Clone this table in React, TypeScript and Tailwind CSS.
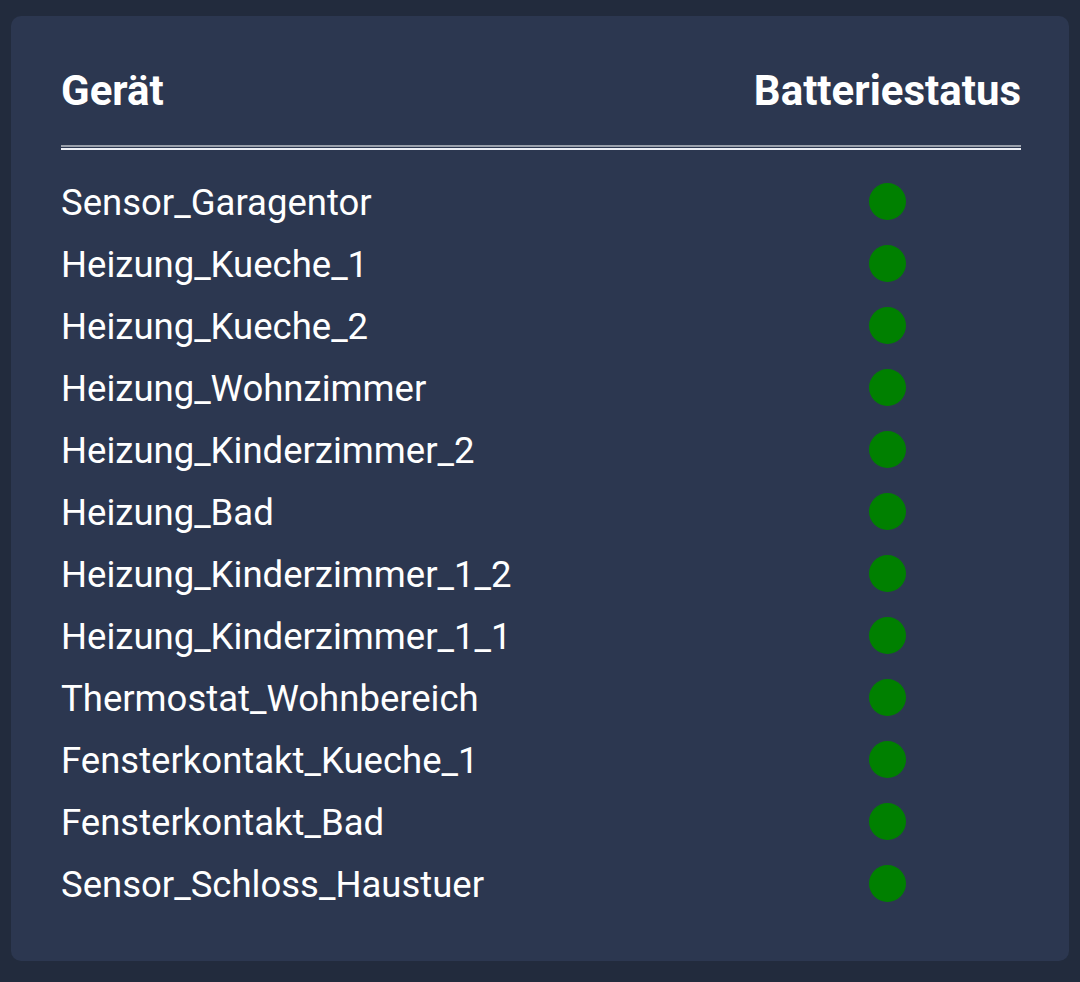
const devices = [
  "Sensor_Garagentor",
  "Heizung_Kueche_1",
  "Heizung_Kueche_2",
  "Heizung_Wohnzimmer",
  "Heizung_Kinderzimmer_2",
  "Heizung_Bad",
  "Heizung_Kinderzimmer_1_2",
  "Heizung_Kinderzimmer_1_1",
  "Thermostat_Wohnbereich",
  "Fensterkontakt_Kueche_1",
  "Fensterkontakt_Bad",
  "Sensor_Schloss_Haustuer",
];

export default function App() {
  return (
    <div
      className="min-h-[982px] bg-[#222b3d] px-[11px] pt-4 pb-[21px] text-white"
      style={{ fontFamily: "Roboto, 'Noto Sans', sans-serif" }}
    >
      <div className="rounded-[10px] bg-[#2c3750] pl-[50px] pr-[48px] pt-[50px] pb-[47px]">
        <div className="grid grid-cols-[1fr_auto]">
          <div className="flex h-[48px] items-center text-[42px] font-bold">Gerät</div>
          <div className="flex h-[48px] items-center text-[42px] font-bold">Batteriestatus</div>
        </div>
        <div className="mt-[31px] flex flex-col">
          <div className="h-[2px] bg-[#9aa0ab]" />
          <div className="h-px" />
          <div className="h-[2px] bg-[#eef0f6]" />
        </div>
        <div className="mt-5 grid grid-cols-[1fr_auto]">
          {devices.map((name) => (
            <div key={name} className="contents">
              <div className="flex h-[62px] items-center pt-1 text-[36.5px]">{name}</div>
              <div className="flex h-[62px] items-center justify-center pl-[4px]">
                <span className="invisible h-0 overflow-hidden text-[42px] font-bold">Batteriestatus</span>
                <span className="absolute h-[37px] w-[37px] rounded-full bg-[#008000]" />
              </div>
            </div>
          ))}
        </div>
      </div>
    </div>
  );
}
